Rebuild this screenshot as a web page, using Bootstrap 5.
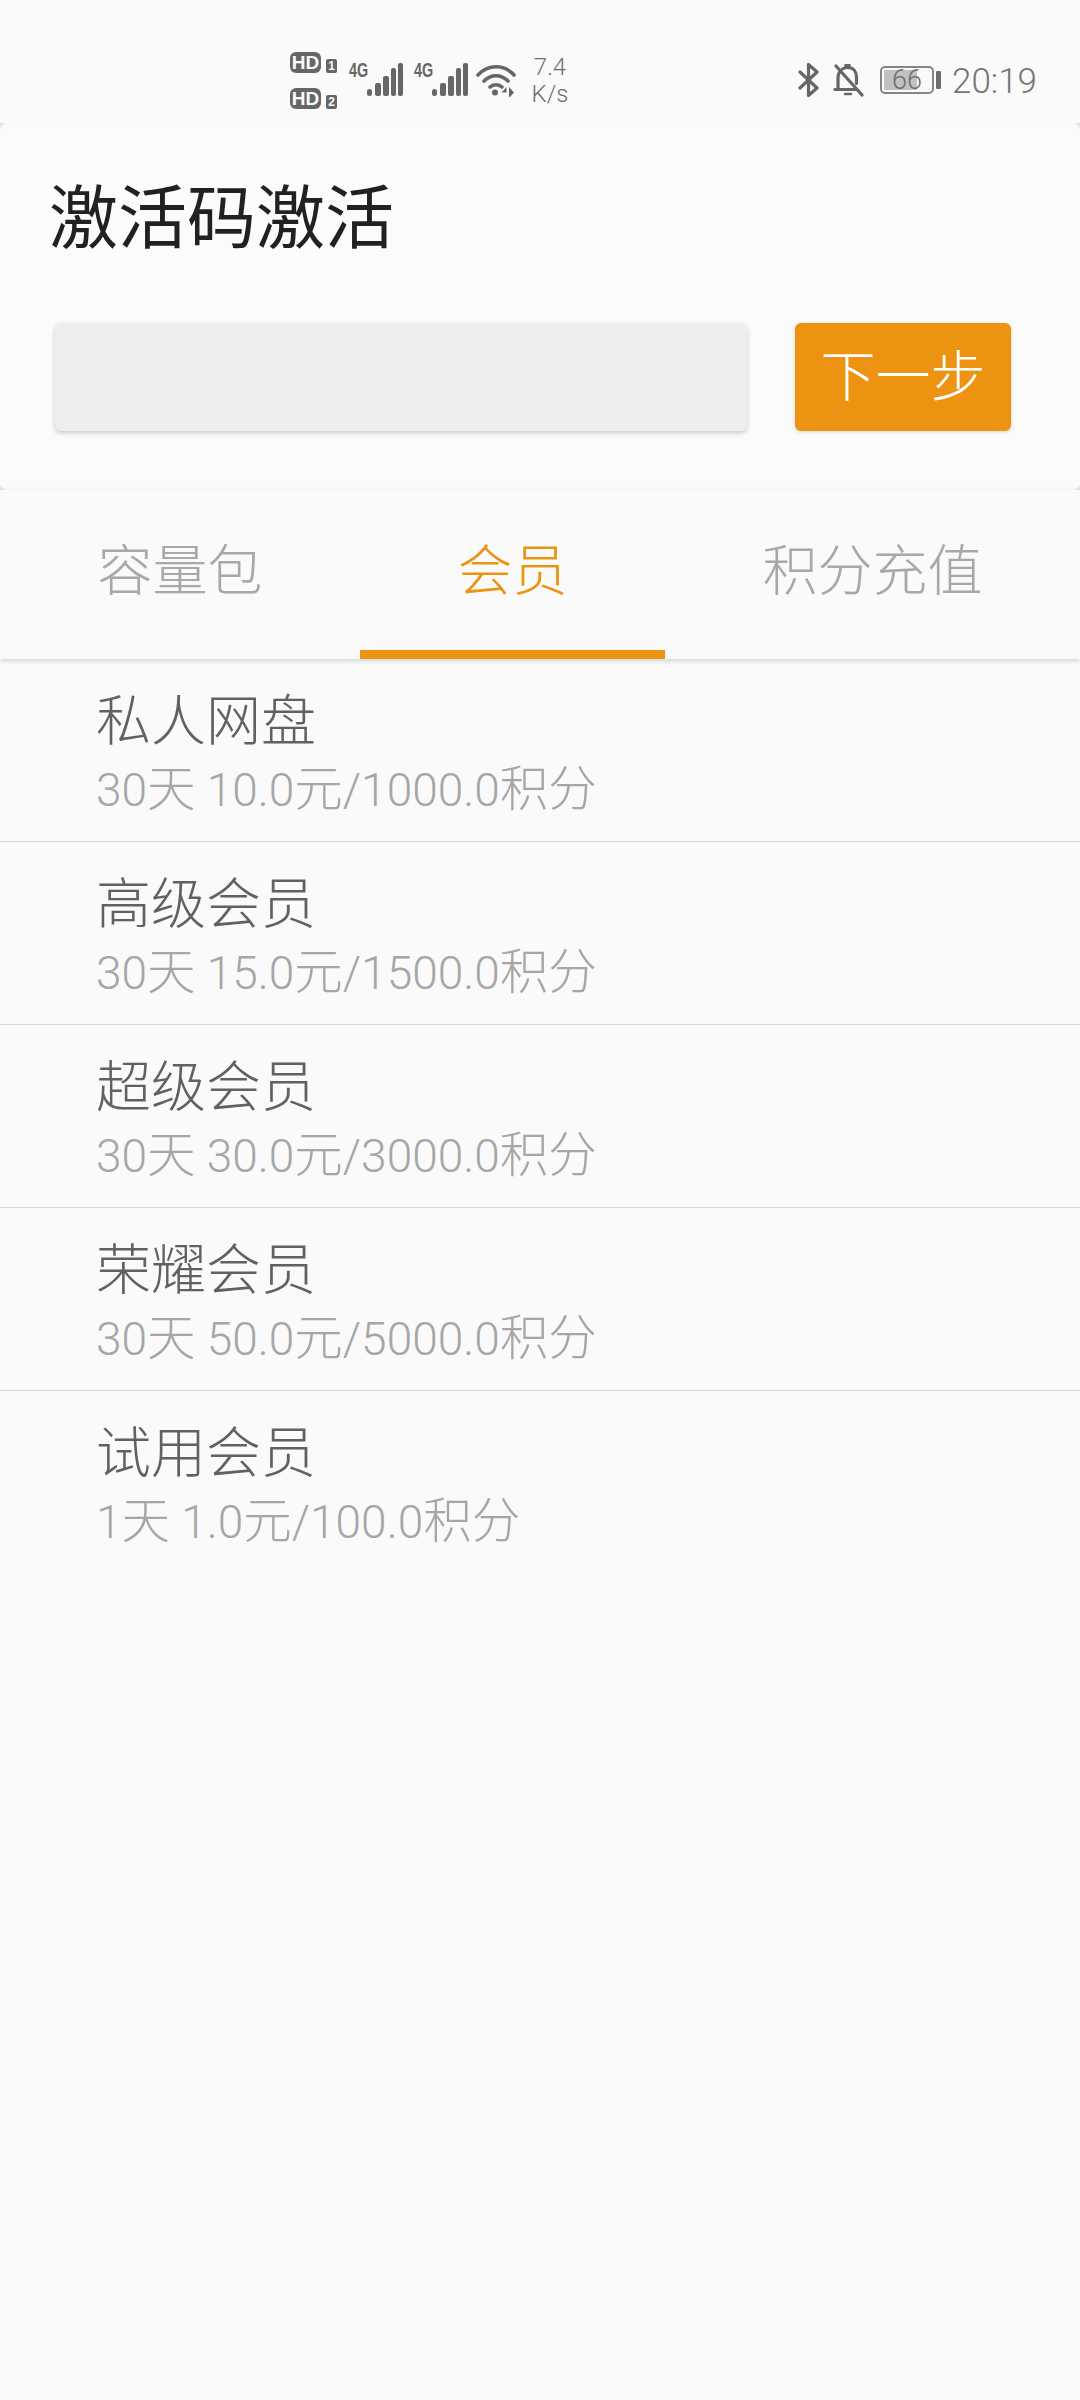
<!DOCTYPE html>
<html lang="zh-CN">
<head>
<meta charset="utf-8">
<title>激活码激活</title>
<link href="https://cdn.jsdelivr.net/npm/bootstrap@5.3.0/dist/css/bootstrap.min.css" rel="stylesheet">
<style>
html,body{background:#fafafa;}
body{width:1080px;min-height:2400px;font-family:Roboto,"Noto Sans CJK SC",sans-serif;font-weight:300;overflow-x:hidden;}
.sbar{height:123px;padding-left:290px;padding-top:37px;color:#757575;}
.hd-col{width:47px;gap:15px;}
.hd-row{height:21px;}
.hd-tag{width:31px;height:21px;background:#666;color:#fafafa;border-radius:6px;font:700 19px/21px "Liberation Sans",sans-serif;text-align:center;}
.hd-num{width:11px;height:14px;margin-left:5px;background:#666;color:#fafafa;border-radius:2px;font:700 12px/14px "Liberation Sans",sans-serif;text-align:center;}
.net1{margin-left:12px;}
.net2{margin-left:11px;}
.net-t{font:700 20px/15px "Liberation Sans",sans-serif;color:#666;width:18px;transform:scaleX(.72);transform-origin:left top;white-space:nowrap;}
.wifi{margin-left:8px;}
.speed{margin-left:14px;padding-top:2px;font-size:24px;line-height:27px;color:#6e6e6e;width:40px;text-align:center;}
.sright{margin-left:auto;padding-right:43px;}
.bell{margin-left:13px;}
.time{font-size:35px;line-height:40px;margin-left:11px;margin-top:4px;color:#757575;}
.batt{width:54px;height:28px;margin-left:16px;border:2px solid #858585;border-radius:5px;padding:2px;}
.batt-fill{width:33px;height:20px;background:#c1c1c1;border-radius:1px;}
.batt-num{font-size:27px;line-height:20px;margin-left:8px;color:#6e6e6e;}
.batt-tip{width:5px;height:18px;background:#6e6e6e;border-radius:1px;margin-left:2px;}
.head-panel{height:367px;padding:63px 69px 0 0;
  background:
    linear-gradient(135deg,#d9d9d9 0,transparent 5px) left top/8px 8px no-repeat,
    linear-gradient(225deg,#d9d9d9 0,transparent 5px) right top/8px 8px no-repeat,
    linear-gradient(45deg,#d9d9d9 0,transparent 5px) left bottom/8px 8px no-repeat,
    linear-gradient(315deg,#d9d9d9 0,transparent 5px) right bottom/8px 8px no-repeat,
    #fbfbfb;}
.head-title{font-size:69px;line-height:68px;font-weight:400;color:#212121;margin:0 0 69px 49px;}
.code-in.form-control{width:692px;height:108px;margin-left:55px;background:#eee;border:0;border-radius:6px;box-shadow:0 2px 5px rgba(0,0,0,.2);}
.next-btn.btn{width:216px;height:108px;margin-left:48px;padding:0;background:#ec9412;border:0;border-radius:6px;color:#fff;font-size:55px;font-weight:300;box-shadow:0 1px 4px rgba(0,0,0,.15);}
.tabbar{height:169px;box-shadow:0 2px 5px rgba(0,0,0,.16);flex-wrap:nowrap;}
.tabbar .nav-link{height:169px;padding:47px 0 0;color:#a8a8a8;font-size:55px;line-height:68px;text-align:center;white-space:nowrap;}
.tabbar .tab-a{width:360px;}
.tabbar .tab-b{width:305px;color:#ec9412;border-bottom:9px solid #ec9412;}
.tabbar .tab-c{width:415px;}
.plans .list-group-item{height:183px;padding:29px 0 0 96px;background:transparent;border-color:#d6d6d6;border-width:0 0 1px;}
.plan-n{font-size:55px;line-height:66px;color:#616161;}
.plan-d{font-size:46px;line-height:54px;color:#a6a6a6;margin-top:9px;}
.hz{font-size:48.5px;line-height:1;}
</style>
</head>
<body>
<div class="sbar d-flex align-items-center">
  <div class="hd-col d-flex flex-column">
    <div class="hd-row d-flex align-items-end"><span class="hd-tag">HD</span><span class="hd-num">1</span></div>
    <div class="hd-row d-flex align-items-end"><span class="hd-tag">HD</span><span class="hd-num">2</span></div>
  </div>
  <div class="d-flex net1">
    <div class="net-t">4G</div>
    <svg width="36" height="34" viewBox="0 0 36 34" fill="#666"><rect x="0" y="26" width="5" height="7" rx="2.5"/><rect x="8" y="20" width="6" height="13" rx="2"/><rect x="16" y="13" width="6" height="20" rx="2"/><rect x="24" y="5" width="5" height="28" rx="2"/><rect x="31" y="0" width="5" height="33" rx="2"/></svg>
  </div>
  <div class="d-flex net2">
    <div class="net-t">4G</div>
    <svg width="36" height="34" viewBox="0 0 36 34" fill="#666"><rect x="0" y="26" width="5" height="7" rx="2.5"/><rect x="8" y="20" width="6" height="13" rx="2"/><rect x="16" y="13" width="6" height="20" rx="2"/><rect x="24" y="5" width="5" height="28" rx="2"/><rect x="31" y="0" width="5" height="33" rx="2"/></svg>
  </div>
  <svg class="wifi" width="40" height="34" viewBox="0 0 40 34" fill="none" stroke="#666" stroke-width="3.6" stroke-linecap="round"><path d="M2 12C12 1 28 1 38 12"/><path d="M8 18C15 11 25 11 32 18"/><path d="M14 24C17 21 23 21 26 24"/><circle cx="19" cy="29.500" r="3" fill="#666" stroke="none"/><path d="M30.500 24l-5 5.500h5zM33 24v11l5-5.500z" fill="#666" stroke="none"/></svg>
  <div class="speed">7.4<br>K/s</div>
  <div class="sright d-flex align-items-center">
    <svg width="22" height="34" viewBox="0 0 22 34" fill="none" stroke="#666" stroke-width="3.2" stroke-linejoin="round" stroke-linecap="round"><path d="M2 9L19 25L10.500 32.500V1.500L19 9L2 25"/></svg>
    <svg class="bell" width="31" height="34" viewBox="0 0 31 34" fill="none" stroke="#666" stroke-width="3.2" stroke-linecap="round"><path d="M2 26.500h20M5 26V15c0-3 .8-5 2-6.500M9.500 6c1.500-1 3-1.500 5-1.500 6 0 9 4 9 10v6"/><path d="M13 4V2.500h3V4"/><path d="M3 3L29 32"/><path d="M12 31h6" stroke-width="2.500"/></svg>
    <div class="batt d-flex"><div class="batt-fill"><div class="batt-num">66</div></div></div>
    <div class="batt-tip"></div>
    <div class="time">20:19</div>
  </div>
</div>

<section class="head-panel">
  <h1 class="head-title">激活码激活</h1>
  <form class="d-flex">
    <input class="form-control code-in" type="text" aria-label="激活码">
    <button type="button" class="btn next-btn">下一步</button>
  </form>
</section>

<nav class="nav tabbar">
  <a class="nav-link tab-a" href="#">容量包</a>
  <a class="nav-link tab-b" href="#">会员</a>
  <a class="nav-link tab-c" href="#">积分充值</a>
</nav>

<div class="list-group list-group-flush plans">
  <div class="list-group-item"><div class="plan-n">私人网盘</div><div class="plan-d">30<span class="hz">天</span> 10.0<span class="hz">元</span>/1000.0<span class="hz">积分</span></div></div>
  <div class="list-group-item"><div class="plan-n">高级会员</div><div class="plan-d">30<span class="hz">天</span> 15.0<span class="hz">元</span>/1500.0<span class="hz">积分</span></div></div>
  <div class="list-group-item"><div class="plan-n">超级会员</div><div class="plan-d">30<span class="hz">天</span> 30.0<span class="hz">元</span>/3000.0<span class="hz">积分</span></div></div>
  <div class="list-group-item"><div class="plan-n">荣耀会员</div><div class="plan-d">30<span class="hz">天</span> 50.0<span class="hz">元</span>/5000.0<span class="hz">积分</span></div></div>
  <div class="list-group-item"><div class="plan-n">试用会员</div><div class="plan-d">1<span class="hz">天</span> 1.0<span class="hz">元</span>/100.0<span class="hz">积分</span></div></div>
</div>
<script src="https://cdn.jsdelivr.net/npm/bootstrap@5.3.0/dist/js/bootstrap.bundle.min.js"></script>
</body>
</html>
